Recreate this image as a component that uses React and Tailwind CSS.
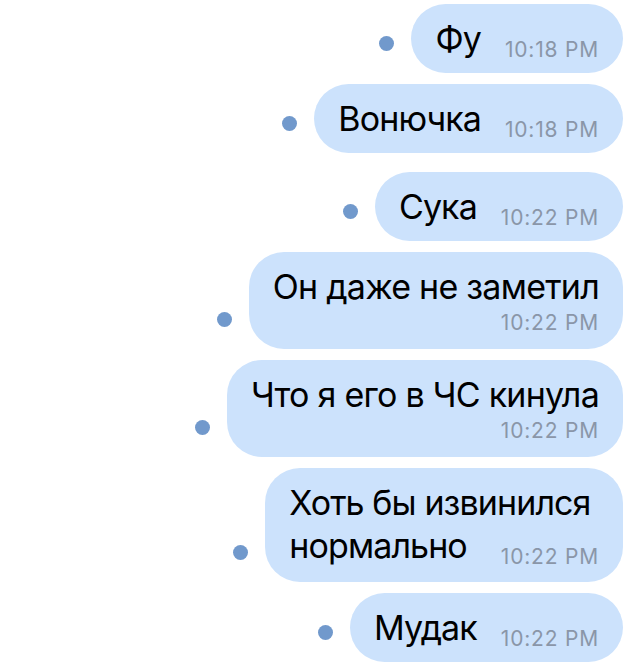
const messages = [
  { lines: ["Фу"], time: "10:18 PM", layout: "inline" },
  { lines: ["Вонючка"], time: "10:18 PM", layout: "inline" },
  { lines: ["Сука"], time: "10:22 PM", layout: "inline", newGroup: true },
  { lines: ["Он даже не заметил"], time: "10:22 PM", layout: "below" },
  { lines: ["Что я его в ЧС кинула"], time: "10:22 PM", layout: "below" },
  { lines: ["Хоть бы извинился", "нормально"], time: "10:22 PM", layout: "inline" },
  { lines: ["Мудак"], time: "10:22 PM", layout: "inline" },
];

function Time({ children, className = "" }) {
  return (
    <span className={"shrink-0 text-[21px] leading-[20px] tracking-[0.8px] text-[#8a96a8] " + className}>
      {children}
    </span>
  );
}

function Line({ children, className = "" }) {
  return (
    <span className={"text-[34px] leading-[43px] whitespace-nowrap " + className}>{children}</span>
  );
}

function Bubble({ msg }) {
  const last = msg.lines[msg.lines.length - 1];
  const rest = msg.lines.slice(0, -1);
  const multi = rest.length > 0;

  return (
    <div className={"flex items-end gap-[17px] " + (msg.newGroup ? "mt-[8px]" : "")}>
      {/* sent dot */}
      <div className="mb-[22px] h-[15px] w-[15px] shrink-0 rounded-full bg-[#7199cc]" />

      <div className="rounded-[35px] bg-[#cce2fc] px-[24px] pt-[13px] text-black">
        {msg.layout === "below" ? (
          <div className="flex flex-col items-end pb-[16px]">
            <Line className="tracking-[-0.75px]">{last}</Line>
            <Time className="mt-[5px]">{msg.time}</Time>
          </div>
        ) : (
          <div className={"flex flex-col " + (multi ? "pb-[15px]" : "pb-[13px]")}>
            {rest.map((l) => (
              <Line key={l} className="tracking-[-0.9px]">
                {l}
              </Line>
            ))}
            <div className={"flex items-end " + (multi ? "gap-[34px]" : "gap-[24px]")}>
              <Line className="tracking-[-0.9px]">{last}</Line>
              <Time className="ml-auto">{msg.time}</Time>
            </div>
          </div>
        )}
      </div>
    </div>
  );
}

export default function App() {
  return (
    <div
      className="flex h-[672px] w-[640px] flex-col items-end gap-[11px] overflow-hidden bg-white pt-[4px] pr-[17px]"
      style={{ fontFamily: "Inter, 'Noto Sans', sans-serif" }}
    >
      {messages.map((m, i) => (
        <Bubble key={i} msg={m} />
      ))}
    </div>
  );
}
